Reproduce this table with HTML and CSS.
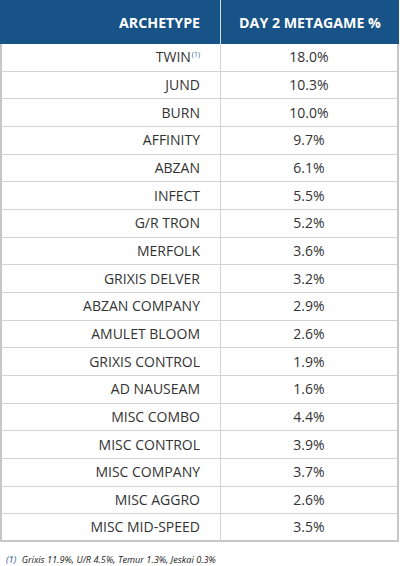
FILE: index.html
```html
<!DOCTYPE html>
<html>
<head>
<meta charset="utf-8">
<link rel="stylesheet" href="styles.css">
</head>
<body>
<div class="wrap">
<table class="meta">
<thead>
<tr><th class="c1">ARCHETYPE</th><th class="c2">DAY 2 METAGAME %</th></tr>
</thead>
<tbody>
<tr><td class="c1">TWIN<sup>(1)</sup></td><td class="c2">18.0%</td></tr>
<tr><td class="c1">JUND</td><td class="c2">10.3%</td></tr>
<tr><td class="c1">BURN</td><td class="c2">10.0%</td></tr>
<tr><td class="c1">AFFINITY</td><td class="c2">9.7%</td></tr>
<tr><td class="c1">ABZAN</td><td class="c2">6.1%</td></tr>
<tr><td class="c1">INFECT</td><td class="c2">5.5%</td></tr>
<tr><td class="c1">G/R TRON</td><td class="c2">5.2%</td></tr>
<tr><td class="c1">MERFOLK</td><td class="c2">3.6%</td></tr>
<tr><td class="c1">GRIXIS DELVER</td><td class="c2">3.2%</td></tr>
<tr><td class="c1">ABZAN COMPANY</td><td class="c2">2.9%</td></tr>
<tr><td class="c1">AMULET BLOOM</td><td class="c2">2.6%</td></tr>
<tr><td class="c1">GRIXIS CONTROL</td><td class="c2">1.9%</td></tr>
<tr><td class="c1">AD NAUSEAM</td><td class="c2">1.6%</td></tr>
<tr><td class="c1">MISC COMBO</td><td class="c2">4.4%</td></tr>
<tr><td class="c1">MISC CONTROL</td><td class="c2">3.9%</td></tr>
<tr><td class="c1">MISC COMPANY</td><td class="c2">3.7%</td></tr>
<tr><td class="c1">MISC AGGRO</td><td class="c2">2.6%</td></tr>
<tr><td class="c1">MISC MID-SPEED</td><td class="c2">3.5%</td></tr>
</tbody>
</table>
<p class="note"><span class="ref">(1)</span> Grixis 11.9%, U/R 4.5%, Temur 1.3%, Jeskai 0.3%</p>
</div>
</body>
</html>
```
FILE: styles.css
```css
html, body { margin: 0; padding: 0; background: #fff; }
body { font-family: "Open Sans", "Noto Sans", sans-serif; color: #333; }
.wrap { width: 399px; }
.meta {
  width: 399px;
  border-collapse: separate;
  border-spacing: 0;
  table-layout: fixed;
}
.meta th {
  background: #185387;
  color: #fff;
  font-weight: 700;
  font-size: 14.2px;
  height: 44px;
  padding: 0;
  box-sizing: border-box;
}
.meta th.c1 { width: 221px; text-align: right; padding-right: 20px; border-right: 1px solid #d7dde5; }
.meta th.c2 { text-align: center; }
.meta td {
  font-size: 14px;
  height: 27.67px;
  padding: 0;
  box-sizing: border-box;
  border-bottom: 1px solid #d2d2d2;
  line-height: 1;
}
.meta td.c1 { text-align: right; padding-right: 20px; border-left: 2px solid #c6c6c6; border-right: 1px solid #d2d2d2; }
.meta td.c2 { text-align: center; border-right: 2px solid #c6c6c6; }
.meta tbody tr:last-child td { border-bottom: 2px solid #c6c6c6; }
sup { font-size: 7px; color: #2a5f95; vertical-align: 5px; margin-left: 1px; }
.note {
  margin: 11px 0 0 6px;
  font-size: 9.2px;
  font-style: italic;
  color: #222;
}
.ref { color: #2a5f95; margin-right: 3px; }
```
